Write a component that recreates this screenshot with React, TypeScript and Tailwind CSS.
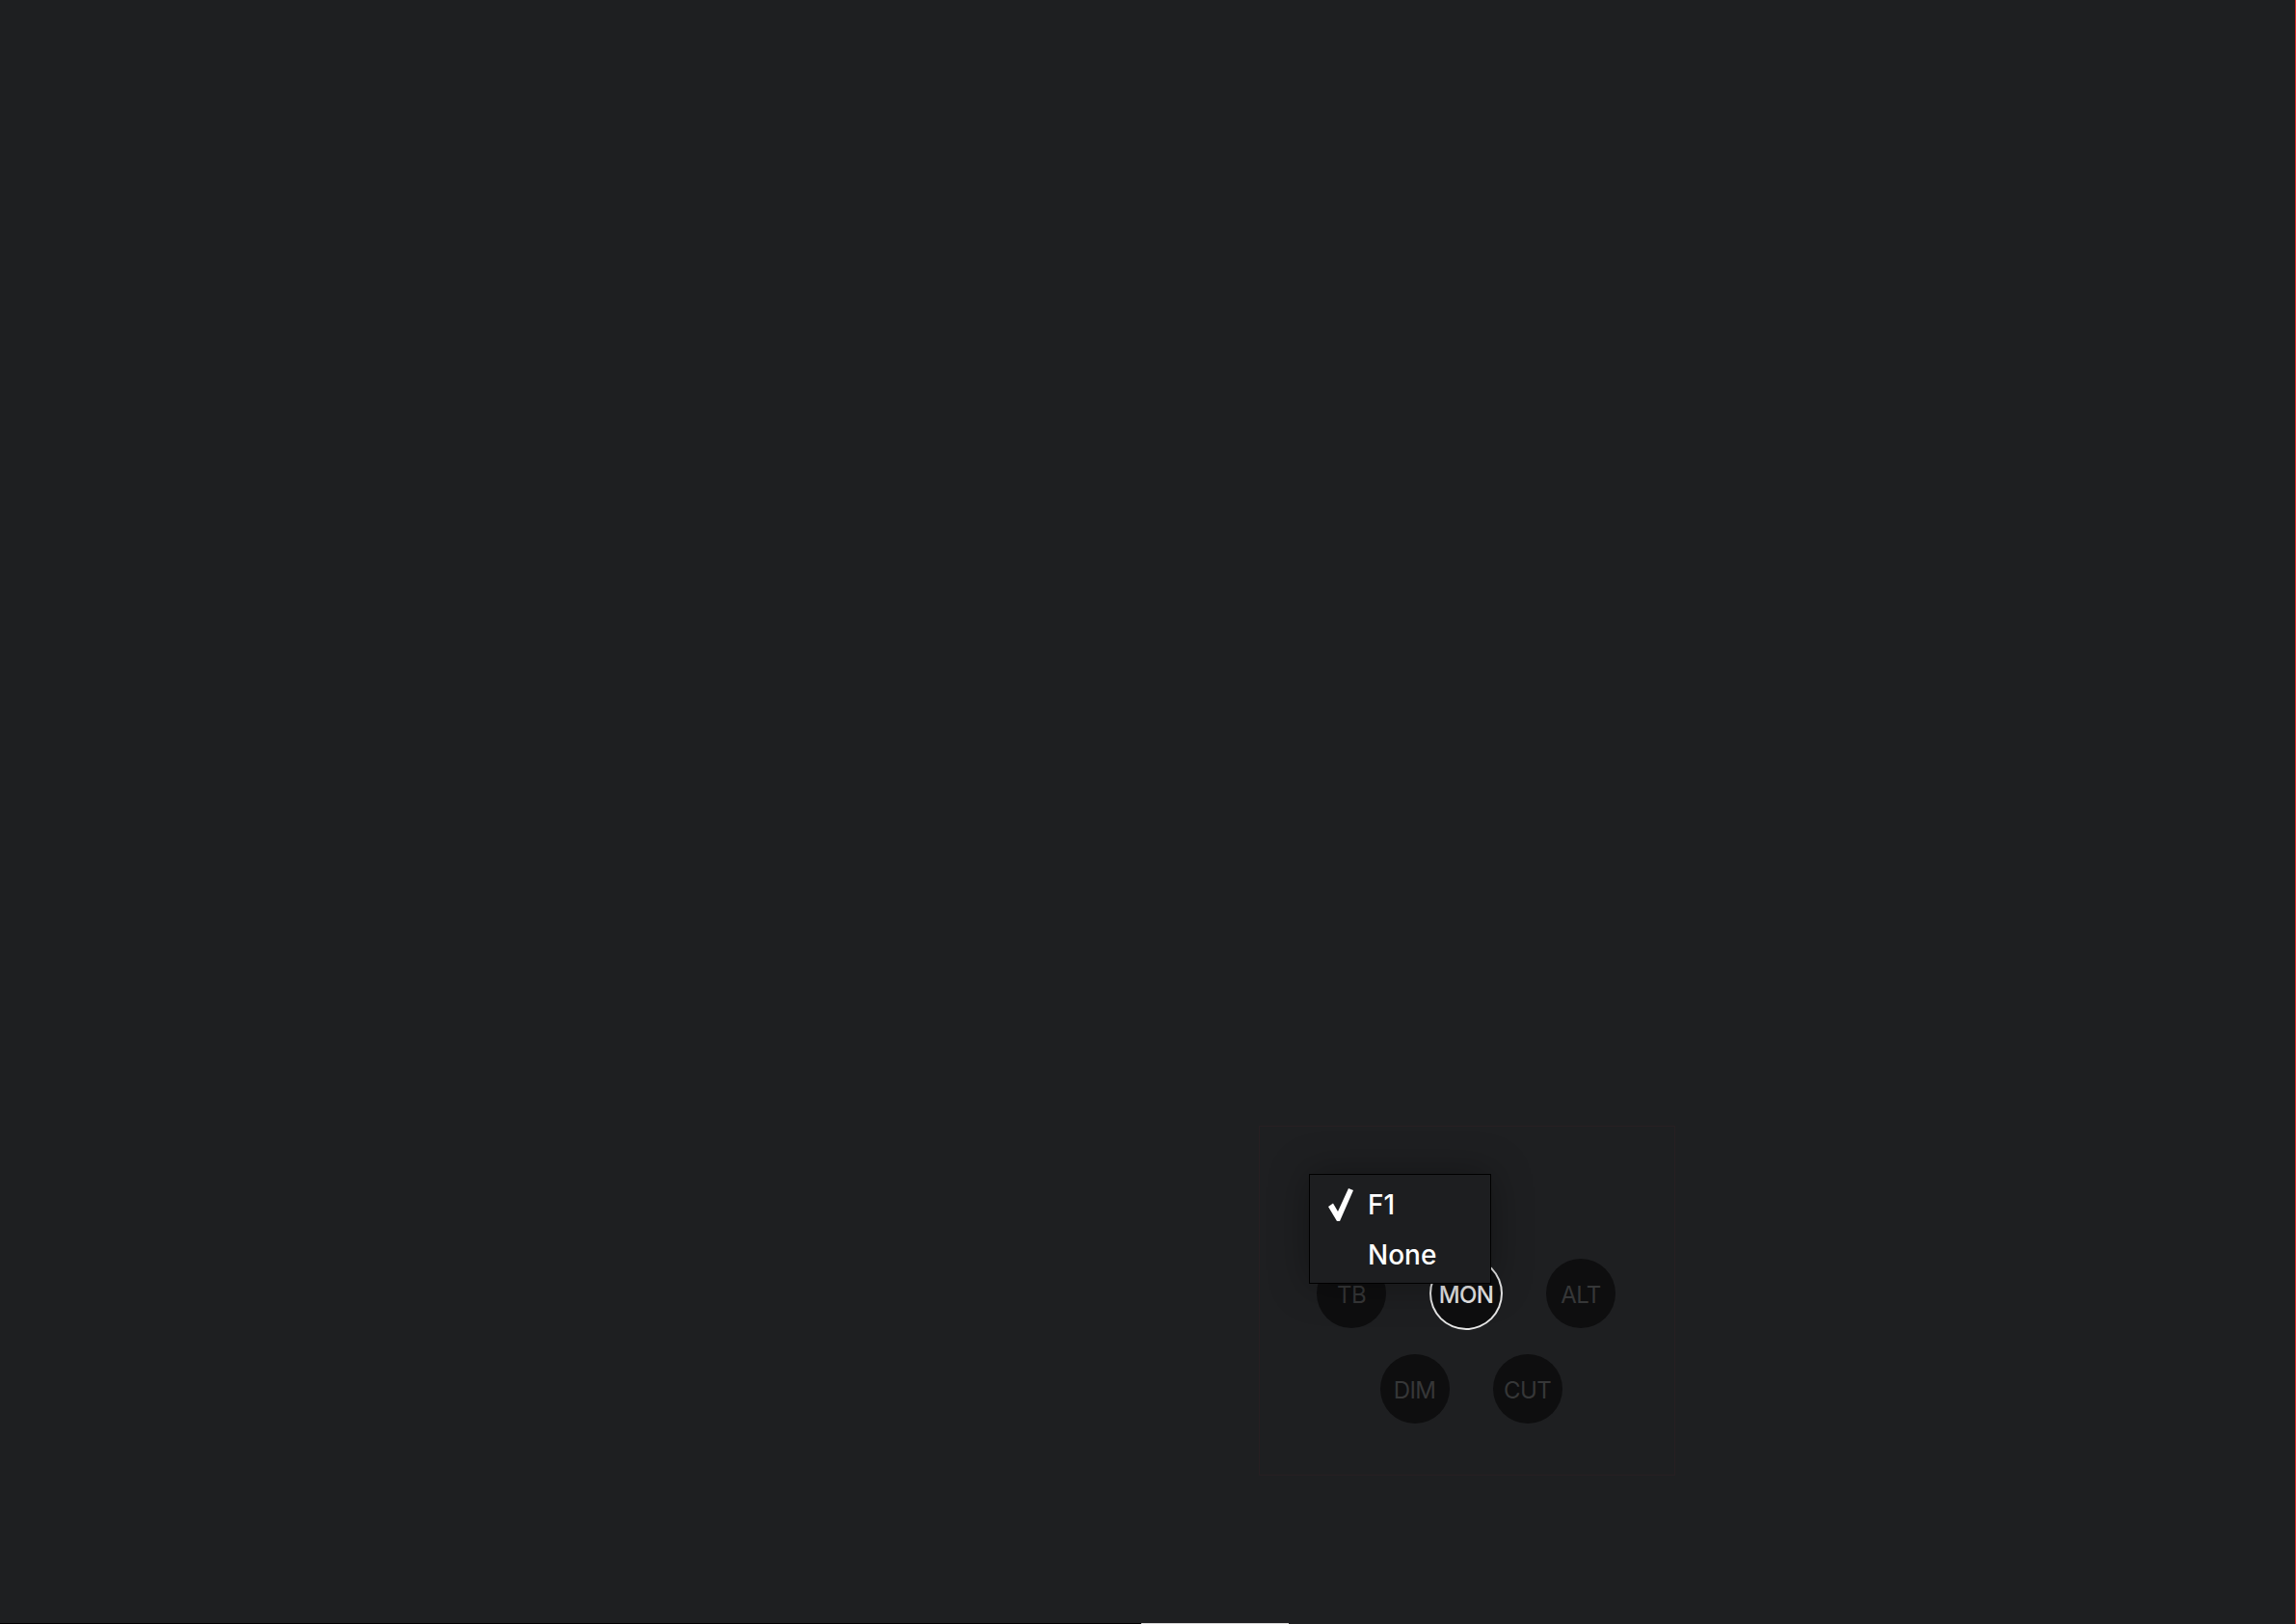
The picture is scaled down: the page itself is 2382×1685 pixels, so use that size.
const font = { fontFamily: 'Inter, "Noto Sans", sans-serif' };

function Pad({ label, active }: { label: string; active?: boolean }) {
  return (
    <div
      className={
        'w-[72px] h-[72px] rounded-full bg-[#0e0e0f] flex items-center justify-center pt-[3px] text-[24px] leading-none tracking-tight ' +
        (active ? 'ring-2 ring-[#e6e6e6] text-[#e8e8e8] font-medium' : 'text-[#363738]')
      }
    >
      {label}
    </div>
  );
}

function Check() {
  return (
    <svg width="26" height="34" viewBox="0 0 26 34" className="shrink-0">
      <path d="M0 19 L5 15.5 L10 24 L21 0 L26 2 L12 34 L9 34 Z" fill="#ffffff" />
    </svg>
  );
}

export default function App() {
  return (
    <div className="flex h-[1685px] w-full bg-[#1e1f21] overflow-hidden" style={font}>
      <div className="flex-1 flex flex-col">
        <div className="flex-1 pl-[1306px] pt-[1168px]">
          {/* monitor section */}
          <div className="relative w-[432px] h-[363px] border border-[#271f22] flex flex-col items-center pt-[137px] gap-[27px]">
            <div className="flex gap-[47px] pr-[2px]">
              <Pad label="TB" />
              <Pad label="MON" active />
              <Pad label="ALT" />
            </div>
            <div className="flex gap-[45px] pl-[8px]">
              <Pad label="DIM" />
              <Pad label="CUT" />
            </div>

            {/* source menu */}
            <div className="absolute left-[51px] top-[49px] w-[189px] h-[114px] bg-[#1d1e20] border border-black shadow-[0_0_40px_rgba(0,0,0,0.35)] py-[5px]">
              <div className="h-[52px] flex items-center pl-[19px] gap-[15px]">
                <Check />
                <span className="text-white text-[28px] font-medium leading-none">F1</span>
              </div>
              <div className="h-[52px] flex items-center pl-[60px]">
                <span className="text-white text-[28px] font-medium leading-none">None</span>
              </div>
            </div>
          </div>
        </div>
        <div className="h-px flex">
          <div className="w-[1184px] bg-black" />
          <div className="w-[153px] bg-[#d6d6d6]" />
        </div>
      </div>
      <div className="w-px bg-[#e0302f]" />
    </div>
  );
}
